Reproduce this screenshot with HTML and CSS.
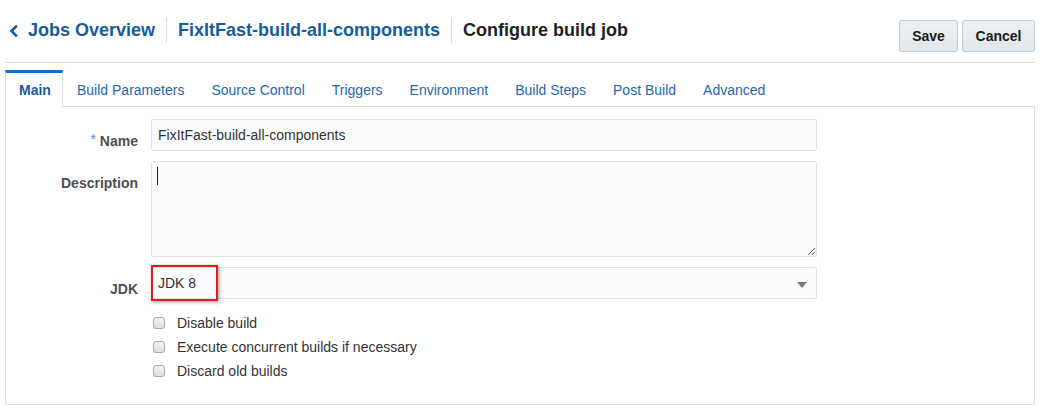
FILE: index.html
```html
<!DOCTYPE html>
<html lang="en">
<head>
<meta charset="utf-8">
<title>Configure build job</title>
<link rel="stylesheet" href="styles.css">
</head>
<body>
<div class="page">
  <header class="header">
    <nav class="crumbs">
      <svg class="chev" width="10" height="12" viewBox="0 0 10 12"><polyline points="7,1.5 2.5,6 7,10.5" fill="none" stroke="#145c9e" stroke-width="2.6" stroke-linecap="square"/></svg>
      <a class="crumb link">Jobs Overview</a>
      <span class="sep"></span>
      <a class="crumb link">FixItFast-build-all-components</a>
      <span class="sep"></span>
      <span class="crumb current">Configure build job</span>
    </nav>
    <div class="actions">
      <button class="btn btn-save">Save</button>
      <button class="btn btn-cancel">Cancel</button>
    </div>
  </header>

  <ul class="tabs">
    <li class="tab active">Main</li>
    <li class="tab">Build Parameters</li>
    <li class="tab">Source Control</li>
    <li class="tab">Triggers</li>
    <li class="tab">Environment</li>
    <li class="tab">Build Steps</li>
    <li class="tab">Post Build</li>
    <li class="tab">Advanced</li>
  </ul>

  <section class="panel">
    <div class="form">
      <label class="label"><span class="req">*</span> Name</label>
      <input class="field input" type="text" value="FixItFast-build-all-components">

      <label class="label">Description</label>
      <div class="area-wrap">
        <textarea class="field area"></textarea>
        <span class="caret"></span>
      </div>

      <label class="label">JDK</label>
      <div class="select-wrap">
        <div class="field select">JDK 8<span class="arrow"></span></div>
        <span class="highlight"></span>
      </div>

      <div class="checks">
        <div class="check"><span class="box"></span>Disable build</div>
        <div class="check"><span class="box"></span>Execute concurrent builds if necessary</div>
        <div class="check"><span class="box"></span>Discard old builds</div>
      </div>
    </div>
  </section>
</div>
</body>
</html>
```

FILE: styles.css
```css
* { box-sizing: border-box; }
html, body { margin: 0; padding: 0; background: #ffffff; }
body {
  font-family: "Liberation Sans", Arial, sans-serif;
  font-size: 14px;
  color: #333333;
}
.page {
  width: 1041px;
  padding: 0 6px 0 5px;
}
.header {
  display: flex;
  justify-content: space-between;
  align-items: flex-start;
  height: 63px;
  border-bottom: 1px solid #d6dfe6;
  padding-left: 4px;
}
.crumbs {
  display: flex;
  align-items: center;
  margin-top: 18px;
  height: 24px;
}
.chev { margin-right: 9px; margin-top: 1px; }
.crumb {
  font-size: 18px;
  font-weight: bold;
  line-height: 24px;
  white-space: nowrap;
}
.link { color: #145c9e; text-decoration: none; }
.current { color: #1f1f1f; }
.sep {
  width: 1px;
  height: 25px;
  background: #d6dfe6;
  margin: 0 11px;
}
.actions {
  display: flex;
  gap: 4px;
  margin-top: 20px;
  margin-right: 0;
}
.btn {
  font-family: "Liberation Sans", Arial, sans-serif;
  font-size: 14px;
  font-weight: bold;
  color: #1a1a1a;
  height: 32px;
  padding: 0 12px;
  border: 1px solid #c4ced7;
  border-radius: 2px;
  background: linear-gradient(#eef1f3, #e2e7eb);
}
.btn-save { width: 59px; }
.btn-cancel { width: 73px; }
.tabs {
  list-style: none;
  margin: 7px 0 0 0;
  padding: 0;
  display: flex;
  height: 36px;
  position: relative;
  z-index: 1;
}
.tab {
  height: 36px;
  padding: 4px 12px 0 13px;
  line-height: 32px;
  color: #1e68b1;
  white-space: nowrap;
  border-left: 1px solid transparent;
  border-right: 1px solid transparent;
}
.tab.active {
  color: #145c9e;
  font-weight: bold;
  background: #ffffff;
  border-top: 3px solid #0572ce;
  border-left: 1px solid #d6dfe6;
  border-right: 1px solid #d6dfe6;
  padding: 1px 12px 0 13px;
  height: 37px;
  width: 58px;
}
.panel {
  border: 1px solid #d6dfe6;
  border-radius: 0 0 3px 3px;
  padding: 12px 0 21px 0;
  height: 299px;
}
.form {
  display: grid;
  grid-template-columns: 132px 666px;
  column-gap: 13px;
  row-gap: 10px;
}
.label {
  text-align: right;
  font-weight: bold;
  color: #4f4f4f;
  line-height: 18px;
  padding-top: 13px;
}
.req {
  color: #4a8fd6;
  font-weight: normal;
  font-size: 14px;
  vertical-align: top;
  position: relative;
  top: -2px;
}
.field {
  display: block;
  width: 666px;
  background: #fbfcfd;
  border: 1px solid #dfe4e8;
  border-radius: 2px;
  font-family: "Liberation Sans", Arial, sans-serif;
  font-size: 14px;
  color: #333333;
  padding: 0 6px;
  margin: 0;
  outline: none;
}
.input { height: 32px; }
.area-wrap { position: relative; height: 96px; }
.area { height: 96px; resize: both; }
.caret {
  position: absolute;
  left: 6px;
  top: 6px;
  width: 1px;
  height: 18px;
  background: #222222;
}
.select-wrap { position: relative; height: 32px; }
.select {
  height: 32px;
  line-height: 30px;
  position: relative;
}
.arrow {
  position: absolute;
  right: 9px;
  top: 14px;
  width: 0;
  height: 0;
  border-left: 5px solid transparent;
  border-right: 5px solid transparent;
  border-top: 6px solid #7a7a7a;
}
.highlight {
  position: absolute;
  left: 0;
  top: -2px;
  width: 67px;
  height: 36px;
  border: 2px solid #e41b1b;
  box-shadow: 1px 1px 4px rgba(0,0,0,0.4);
}
.checks {
  grid-column: 2;
  margin-top: 2px;
}
.check {
  display: flex;
  align-items: center;
  height: 24px;
  line-height: 24px;
  color: #333333;
}
.box {
  width: 12px;
  height: 12px;
  margin: 0 12px 0 2px;
  border: 1px solid #a9a9a9;
  border-radius: 3px;
  background: linear-gradient(#f4f4f4, #dedede);
}
```
